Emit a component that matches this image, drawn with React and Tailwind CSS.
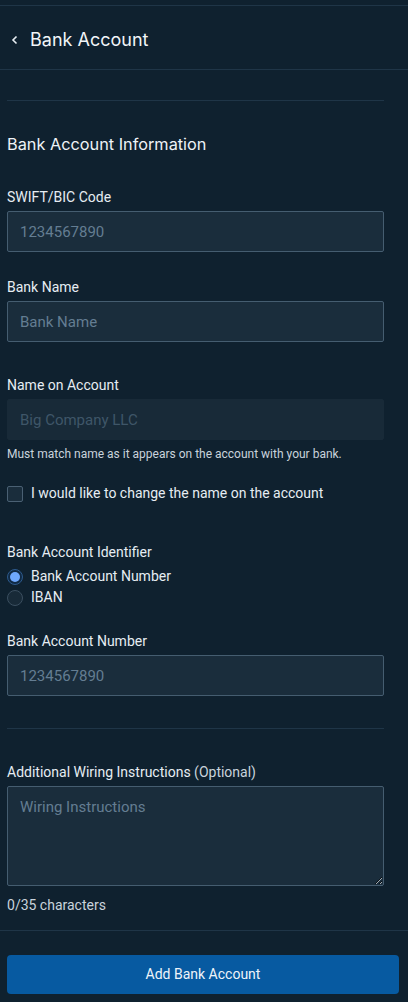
import React, { useState } from 'react';

const Label = ({ children }) => (
  <label className="block text-[14px] leading-[20px] text-[#e6edf3] mb-[4px]">{children}</label>
);

const TextInput = ({ placeholder, disabled }) => (
  <input
    type="text"
    placeholder={placeholder}
    disabled={disabled}
    className={
      'block w-full h-[41px] px-[12px] text-[15px] rounded-[2px] outline-none ' +
      (disabled
        ? 'bg-[#182a38] border border-[#182a38] placeholder-[#3f5668]'
        : 'bg-[#1a2d3c] border border-[#455d70] placeholder-[#647d92] text-white')
    }
  />
);

export default function App() {
  const [idType, setIdType] = useState('number');
  const [notes, setNotes] = useState('');

  return (
    <div className="min-h-[1002px] w-[408px] bg-[#0f212f] text-white font-['Roboto',sans-serif] flex flex-col">
      <div className="h-[6px] border-b border-[#1f3547]" />
      <div className="h-[64px] flex items-center pl-[10px] pt-[4px] border-b border-[#1f3547] font-['Inter',sans-serif]">
        <svg width="10" height="10" viewBox="0 0 10 10" className="mr-[10px]">
          <path d="M6.5 1.5 L3 5 L6.5 8.5" stroke="#e8eef3" strokeWidth="1.6" fill="none" />
        </svg>
        <span className="text-[18px] text-[#f1f5f8]">Bank Account</span>
      </div>

      <div className="w-[377px] ml-[7px] flex-1">
        <div className="h-[31px] border-b border-[#1f3547]" />
        <h2 className="mt-[32px] text-[16.3px] leading-[22px] font-['Inter',sans-serif] text-[#eef3f7]">
          Bank Account Information
        </h2>

        <div className="mt-[32px]">
          <Label>SWIFT/BIC Code</Label>
          <TextInput placeholder="1234567890" />
        </div>

        <div className="mt-[25px]">
          <Label>Bank Name</Label>
          <TextInput placeholder="Bank Name" />
        </div>

        <div className="mt-[33px]">
          <Label>Name on Account</Label>
          <TextInput placeholder="Big Company LLC" disabled />
          <p className="mt-[5px] text-[12px] leading-[18px] text-[#c9d3dc]">
            Must match name as it appears on the account with your bank.
          </p>
        </div>

        <label className="mt-[20px] flex items-center gap-[8px] text-[14px] text-[#e6edf3]">
          <span className="w-[16px] h-[16px] rounded-[2px] border border-[#4a6073] bg-[#1a2d3c]" />
          I would like to change the name on the account
        </label>

        <div className="mt-[38px]">
          <div className="text-[14px] leading-[20px] text-[#e6edf3]">Bank Account Identifier</div>
          <div className="flex flex-col mt-[4px]">
            {[
              ['number', 'Bank Account Number'],
              ['iban', 'IBAN'],
            ].map(([key, text]) => (
              <button
                key={key}
                onClick={() => setIdType(key)}
                className="flex items-center gap-[8px] h-[21px] text-[14px] text-[#e6edf3] text-left"
              >
                <span
                  className={
                    'w-[16px] h-[16px] rounded-full flex items-center justify-center border ' +
                    (idType === key ? 'border-[#2d5a8c] bg-[#102a45]' : 'border-[#3b4f60] bg-[#182a38]')
                  }
                >
                  {idType === key && <span className="w-[10px] h-[10px] rounded-full bg-[#6ea8fe]" />}
                </span>
                {text}
              </button>
            ))}
          </div>
        </div>

        <div className="mt-[23px]">
          <Label>Bank Account Number</Label>
          <TextInput placeholder="1234567890" />
        </div>

        <div className="h-[33px] border-b border-[#1f3547]" />

        <div className="mt-[33px]">
          <Label>
            Additional Wiring Instructions <span className="text-[#c9d3dc]">(Optional)</span>
          </Label>
          <textarea
            value={notes}
            maxLength={35}
            onChange={(e) => setNotes(e.target.value)}
            placeholder="Wiring Instructions"
            className="block w-full h-[100px] px-[12px] py-[9px] text-[15px] rounded-[2px] outline-none bg-[#1a2d3c] border border-[#455d70] placeholder-[#647d92] text-white"
          />
          <div className="mt-[9px] text-[14px] leading-[20px] text-[#c9d3dc]">{notes.length}/35 characters</div>
        </div>
      </div>

      <div className="mt-[15px] border-t border-[#1f3547] pt-[24px] pb-[8px] px-[7px] pr-[9px]">
        <button className="w-full h-[39px] rounded-[4px] bg-[#075aa1] text-[14px] text-[#eef4fa]">
          Add Bank Account
        </button>
      </div>
    </div>
  );
}
